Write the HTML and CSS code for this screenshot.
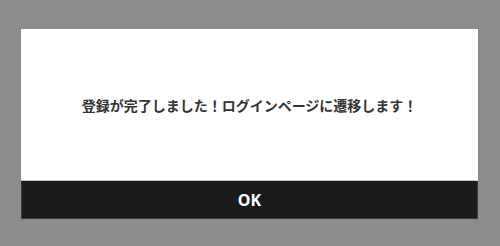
FILE: index.html
```html
<!DOCTYPE html>
<html lang="ja">
<head>
<meta charset="utf-8">
<link rel="stylesheet" href="styles.css">
</head>
<body>
<div class="overlay">
  <div class="dialog">
    <div class="message">登録が完了しました！ログインページに遷移します！</div>
    <button class="ok">OK</button>
  </div>
</div>
</body>
</html>
```
FILE: styles.css
```css
html, body {
  margin: 0;
  padding: 0;
  width: 500px;
  height: 246px;
  background: #8c8c8c;
  font-family: "Noto Sans", "Noto Sans CJK JP", sans-serif;
}
.overlay {
  box-sizing: border-box;
  height: 246px;
  padding: 29px 22px 27px 21px;
  display: flex;
}
.dialog {
  flex: 1;
  display: flex;
  flex-direction: column;
  background: #ffffff;
}
.message {
  flex: 1;
  display: flex;
  align-items: center;
  justify-content: center;
  font-family: "Noto Sans CJK JP", sans-serif;
  font-weight: 700;
  font-size: 14px;
  color: #333333;
  border-bottom: 1px solid #c8c8c8;
}
.ok {
  height: 38px;
  border: none;
  border-left: 1px solid #3a3a3a;
  border-right: 1px solid #3a3a3a;
  border-bottom: 1px solid #3a3a3a;
  background: #1a1a1a;
  color: #ffffff;
  font-family: "Noto Sans", sans-serif;
  font-weight: 700;
  font-size: 16px;
  padding: 0;
  margin: 0;
}
```
